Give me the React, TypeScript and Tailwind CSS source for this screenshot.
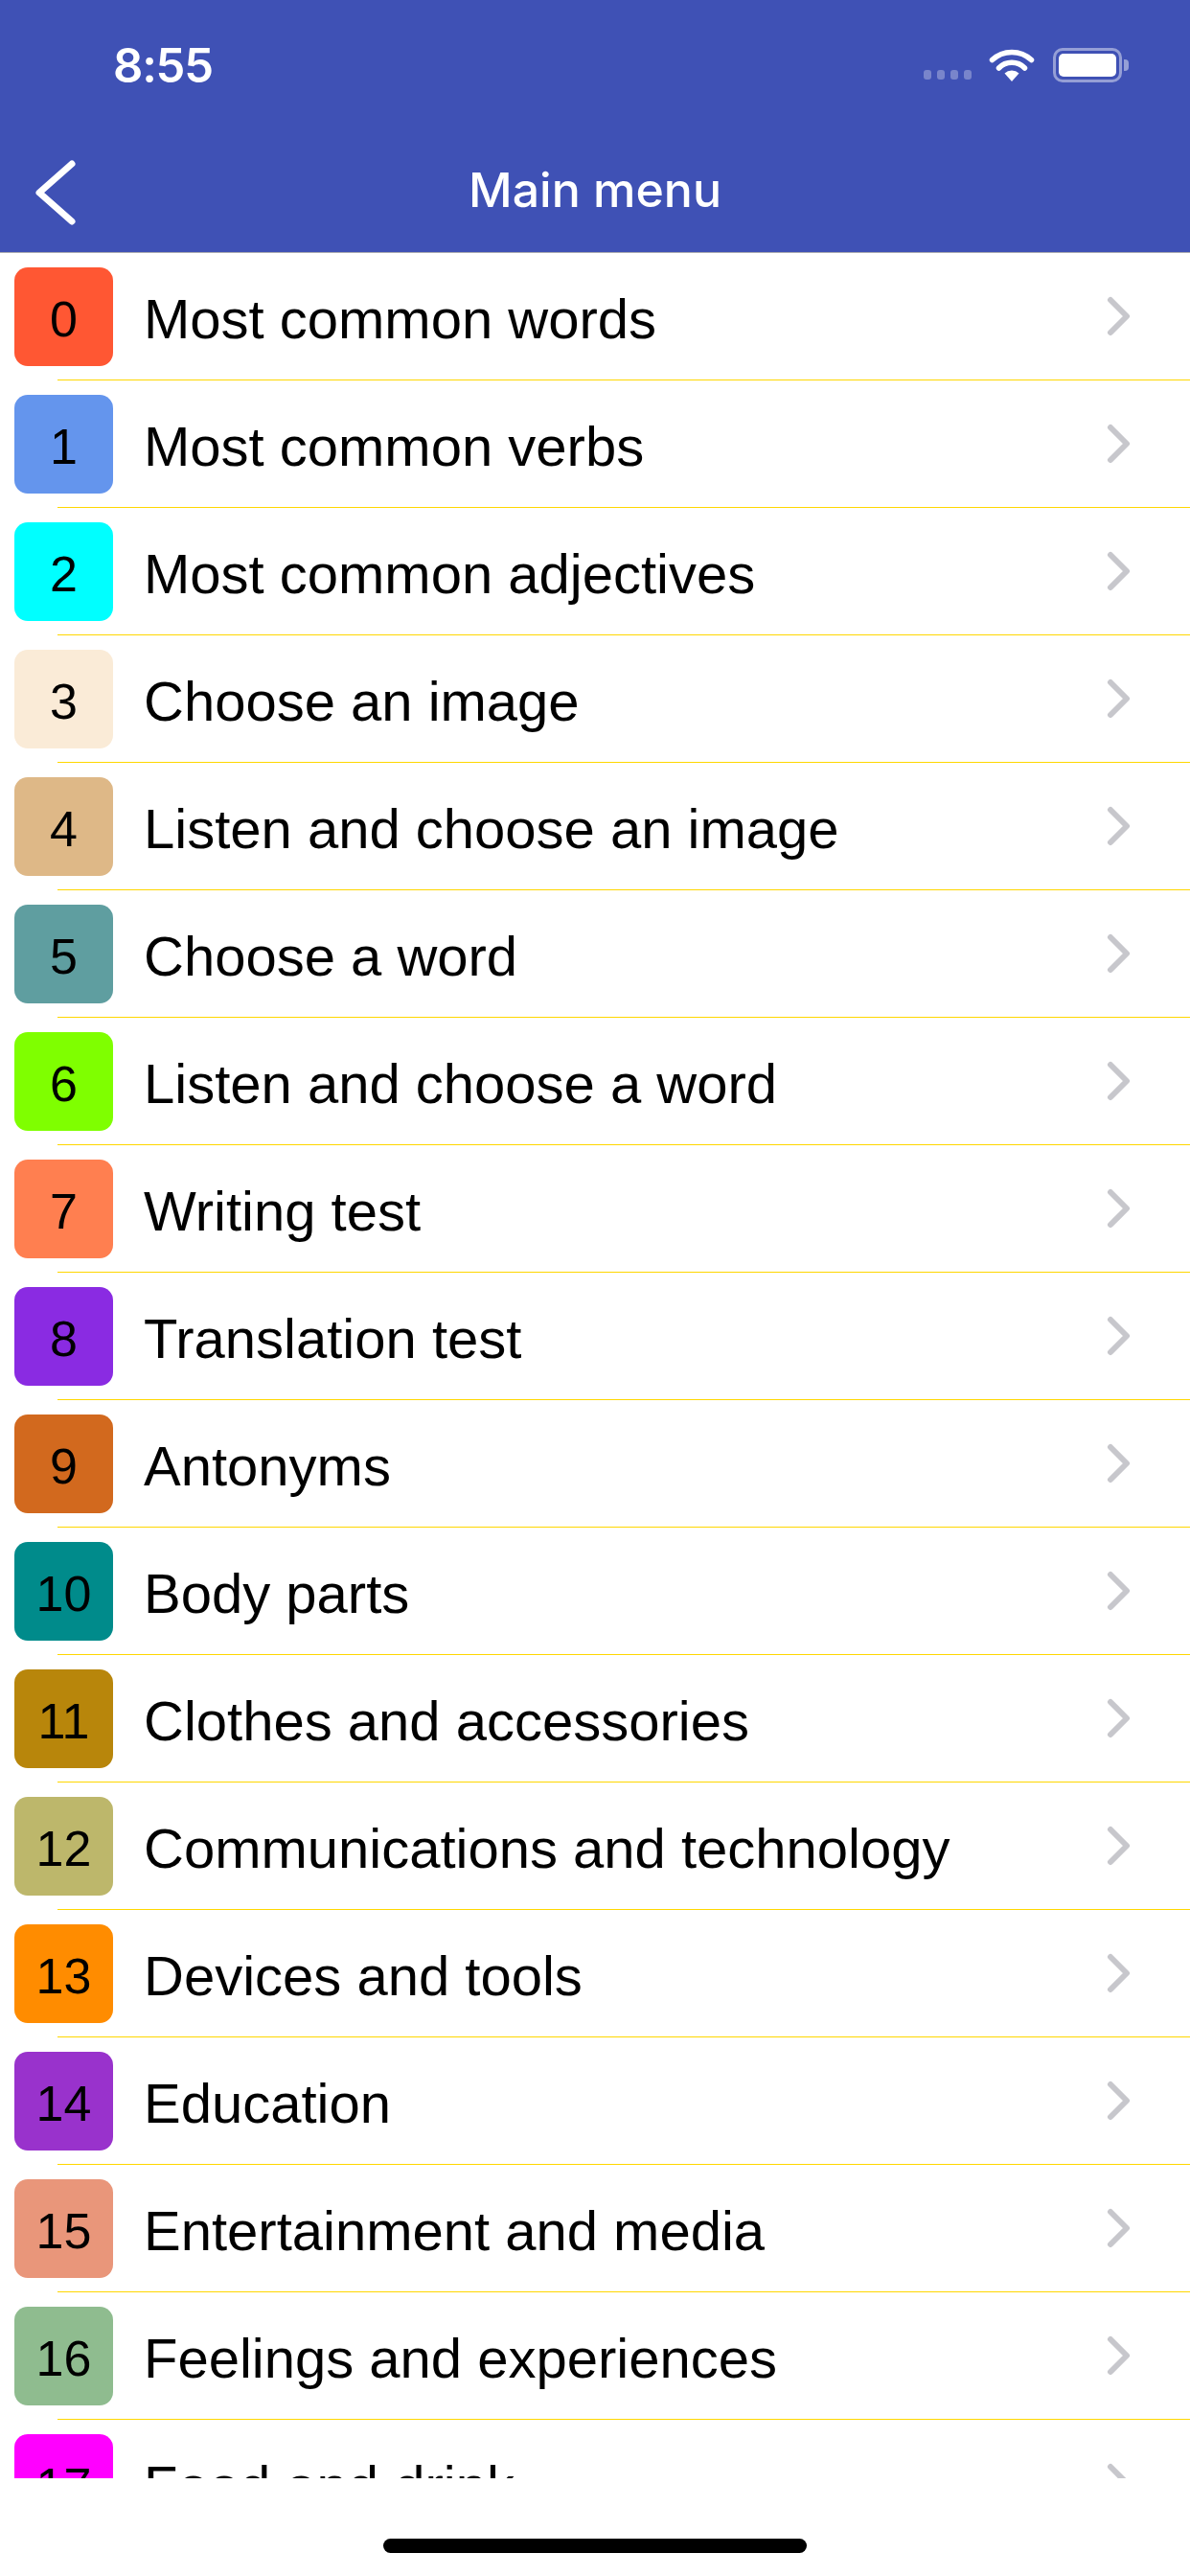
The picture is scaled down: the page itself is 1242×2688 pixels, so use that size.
import React from 'react';

const items = [
  { label: 'Most common words', color: 'bg-[#ff5733]' },
  { label: 'Most common verbs', color: 'bg-[#6495ed]' },
  { label: 'Most common adjectives', color: 'bg-[#00ffff]' },
  { label: 'Choose an image', color: 'bg-[#faebd7]' },
  { label: 'Listen and choose an image', color: 'bg-[#deb887]' },
  { label: 'Choose a word', color: 'bg-[#5f9ea0]' },
  { label: 'Listen and choose a word', color: 'bg-[#7fff00]' },
  { label: 'Writing test', color: 'bg-[#ff7f50]' },
  { label: 'Translation test', color: 'bg-[#8a2be2]' },
  { label: 'Antonyms', color: 'bg-[#d2691e]' },
  { label: 'Body parts', color: 'bg-[#008b8b]' },
  { label: 'Clothes and accessories', color: 'bg-[#b8860b]' },
  { label: 'Communications and technology', color: 'bg-[#bdb76b]' },
  { label: 'Devices and tools', color: 'bg-[#ff8c00]' },
  { label: 'Education', color: 'bg-[#9932cc]' },
  { label: 'Entertainment and media', color: 'bg-[#e9967a]' },
  { label: 'Feelings and experiences', color: 'bg-[#8fbc8f]' },
  { label: 'Food and drink', color: 'bg-[#ff00ff]' },
];

function StatusBar() {
  return (
    <div className="flex h-[132px] items-center justify-between pl-[118px] pr-[64px] pt-[4px] text-white">
      <span className="font-['Inter',sans-serif] text-[49px] font-semibold leading-none tracking-tight">
        8:55
      </span>
      <div className="flex items-center">
        <div className="mt-[20px] flex gap-[6px]">
          <span className="h-[10px] w-[8px] rounded-[3px] bg-white/30" />
          <span className="h-[10px] w-[8px] rounded-[3px] bg-white/30" />
          <span className="h-[10px] w-[8px] rounded-[3px] bg-white/30" />
          <span className="h-[10px] w-[8px] rounded-[3px] bg-white/30" />
        </div>
        <svg width="48" height="36" viewBox="0 0 48 36" className="ml-[18px]">
          <path d="M24 35 L16.5 26.5 A 11 11 0 0 1 31.5 26.5 Z" fill="white" />
          <path d="M10.5 21 A 19 19 0 0 1 37.5 21" stroke="white" strokeWidth="5.5" fill="none" strokeLinecap="round" />
          <path d="M3.5 12.5 A 30 30 0 0 1 44.5 12.5" stroke="white" strokeWidth="5.5" fill="none" strokeLinecap="round" />
        </svg>
        <div className="ml-[19px] flex items-center">
          <div className="flex h-[36px] w-[72px] items-center rounded-[10px] border-[3px] border-white/45 p-[3px]">
            <div className="h-full w-full rounded-[5px] bg-white" />
          </div>
          <div className="ml-[2px] h-[12px] w-[5px] rounded-r-[4px] bg-white/45" />
        </div>
      </div>
    </div>
  );
}

function NavBar() {
  return (
    <div className="relative flex h-[131px] items-center justify-center">
      <div className="absolute left-[34px] top-[34px]">
        <svg width="48" height="70" viewBox="0 0 48 70">
          <polyline
            points="41,5 7,35 41,65"
            stroke="white"
            strokeWidth="7"
            fill="none"
            strokeLinecap="round"
            strokeLinejoin="round"
          />
        </svg>
      </div>
      <h1 className="font-['Inter',sans-serif] text-[50px] font-medium leading-none text-white">
        Main menu
      </h1>
    </div>
  );
}

function MenuRow({ index, label, color }: { index: number; label: string; color: string }) {
  return (
    <div className="flex flex-col">
      <div className="flex h-[132px] items-center pl-[15px] pr-[60px]">
        <div
          className={`flex h-[103px] w-[103px] shrink-0 items-center justify-center rounded-[14px] ${color}`}
        >
          <span className="mt-[5px] font-['Liberation_Sans',Arial,sans-serif] text-[52px] leading-none text-black">
            {index}
          </span>
        </div>
        <span className="ml-[32px] mt-[6px] flex-1 font-['Liberation_Sans',Arial,sans-serif] text-[58px] leading-none text-black">
          {label}
        </span>
        <svg width="28" height="42" viewBox="0 0 28 42">
          <polyline
            points="5,4 22,21 5,38"
            stroke="#c7c7cc"
            strokeWidth="6"
            fill="none"
            strokeLinecap="round"
            strokeLinejoin="round"
          />
        </svg>
      </div>
      <div className="ml-[60px] h-px bg-[#ffd700]" />
    </div>
  );
}

export default function App() {
  return (
    <div className="flex h-[2688px] w-[1242px] flex-col overflow-hidden bg-white">
      <header className="shrink-0 border-b border-[#a9a9b0] bg-[#3f51b5]">
        <StatusBar />
        <NavBar />
      </header>
      <main className="h-[2322px] shrink-0 overflow-hidden">
        {items.map((item, i) => (
          <MenuRow key={item.label} index={i} label={item.label} color={item.color} />
        ))}
      </main>
      <div className="flex flex-1 items-start justify-center pt-[63px]">
        <div className="h-[15px] w-[442px] rounded-full bg-black" />
      </div>
    </div>
  );
}
